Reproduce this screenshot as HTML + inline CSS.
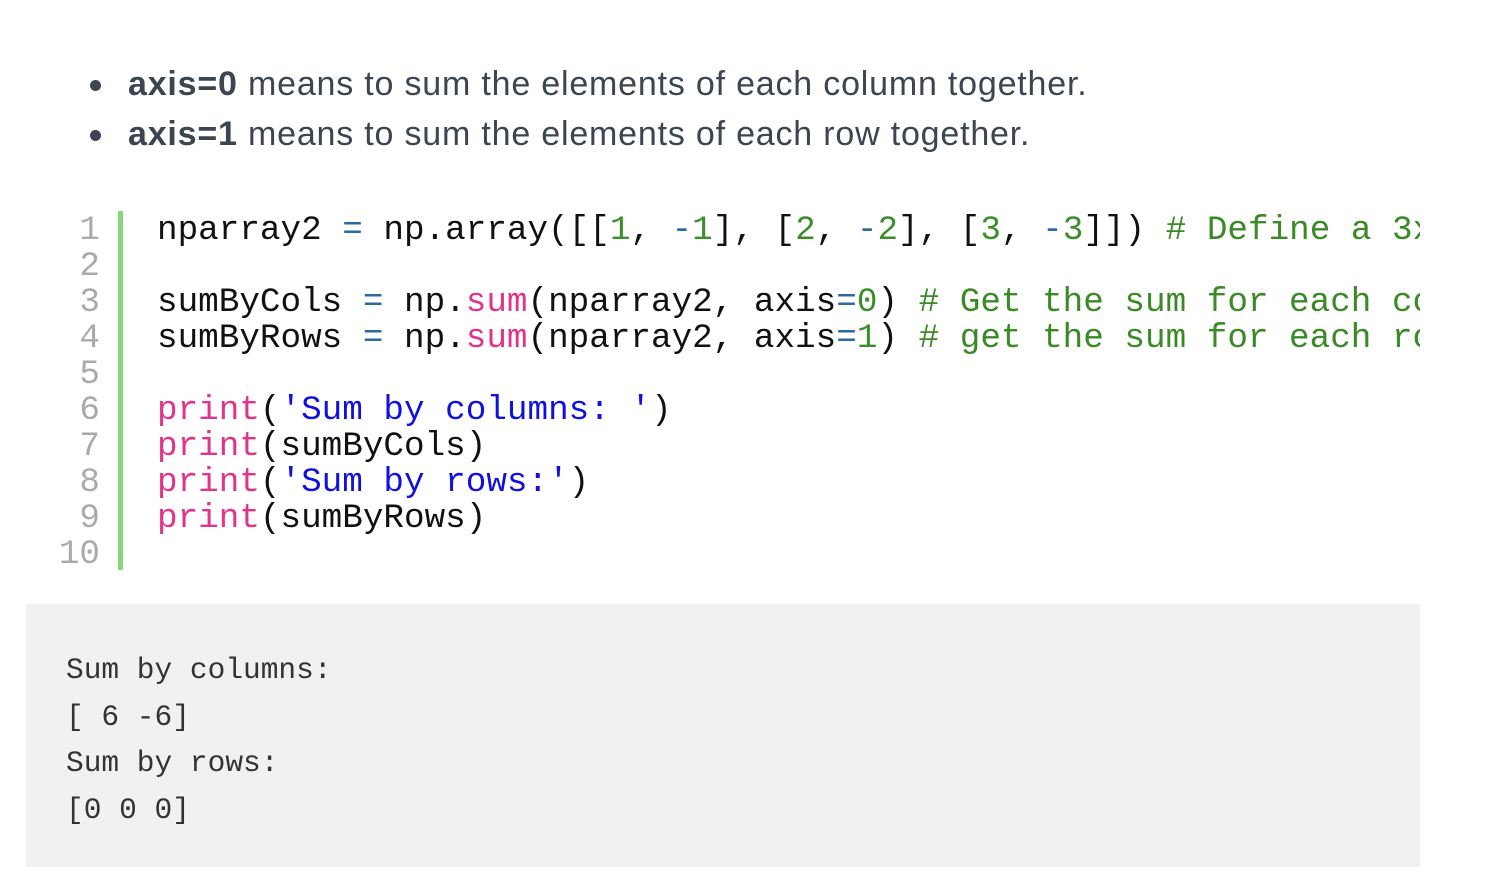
<!DOCTYPE html>
<html><head><style>
body{margin:0;width:1510px;height:894px;background:#fff;overflow:hidden;position:relative}
ul{position:absolute;left:88px;top:61px;margin:0;padding:0;list-style:none;font-family:"Liberation Sans",sans-serif;font-size:34px;letter-spacing:0.8px;color:#3d4452}
li{height:50px;line-height:46px;position:relative;padding-left:40px}
li:before{content:"";position:absolute;left:2px;top:19px;width:11px;height:11px;border-radius:50%;background:#3d4452}
.code{position:absolute;left:0;top:211px;width:1420px;height:362px;overflow:hidden;font-family:"Liberation Mono","DejaVu Sans Mono",monospace;font-size:34.3px;line-height:36px}
.nums{position:absolute;left:40px;width:60px;text-align:right;color:#aaa;top:2px}
.bar{position:absolute;left:118px;top:-1px;width:5px;height:360px;background:#86d877}
pre{margin:0;font:inherit;position:absolute;left:157px;top:2px;color:#111;white-space:pre}
.o{color:#2a6aa0}.n{color:#3a8f2a}.c{color:#3a8a25}.k{color:#e2358a}.s{color:#1010e0}
.out{position:absolute;left:26px;top:604px;width:1394px;height:263px;background:#f1f1f1}
.out pre{left:40px;top:43px;font-family:"Liberation Mono","DejaVu Sans Mono",monospace;font-size:29.5px;line-height:46.5px;color:#333}
</style></head><body>
<ul>
<li><b>axis=0</b> means to sum the elements of each column together.</li>
<li><b>axis=1</b> means to sum the elements of each row together.</li>
</ul>
<div class="code">
<div class="nums">1<br>2<br>3<br>4<br>5<br>6<br>7<br>8<br>9<br>10</div>
<div class="bar"></div>
<pre>nparray2 <span class="o">=</span> np.array([[<span class="n">1</span>, <span class="o">-</span><span class="n">1</span>], [<span class="n">2</span>, <span class="o">-</span><span class="n">2</span>], [<span class="n">3</span>, <span class="o">-</span><span class="n">3</span>]]) <span class="c"># Define a 3x2 matrix</span>

sumByCols <span class="o">=</span> np.<span class="k">sum</span>(nparray2, axis<span class="o">=</span><span class="n">0</span>) <span class="c"># Get the sum for each column</span>
sumByRows <span class="o">=</span> np.<span class="k">sum</span>(nparray2, axis<span class="o">=</span><span class="n">1</span>) <span class="c"># get the sum for each row</span>

<span class="k">print</span>(<span class="s">'Sum by columns: '</span>)
<span class="k">print</span>(sumByCols)
<span class="k">print</span>(<span class="s">'Sum by rows:'</span>)
<span class="k">print</span>(sumByRows)
</pre>
</div>
<div class="out"><pre>Sum by columns:
[ 6 -6]
Sum by rows:
[0 0 0]</pre></div>
</body></html>
